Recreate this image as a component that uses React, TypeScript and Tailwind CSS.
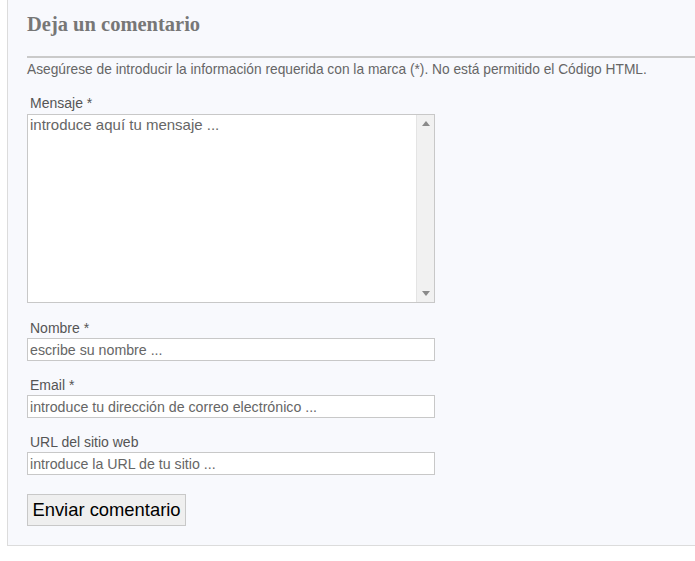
const FIELDS = [
  { label: "Nombre *", placeholder: "escribe su nombre ...", top: "mt-[17px]" },
  { label: "Email *", placeholder: "introduce tu dirección de correo electrónico ...", top: "mt-[16px]" },
  { label: "URL del sitio web", placeholder: "introduce la URL de tu sitio ...", top: "mt-[16px]" },
];

function Field({ label, placeholder, top }: { label: string; placeholder: string; top: string }) {
  return (
    <div className={top}>
      <label className="block pl-[3px] text-[14px] leading-[16px] text-[#555]">{label}</label>
      <input
        type="text"
        placeholder={placeholder}
        className="mt-[2px] block h-[23px] w-[408px] border border-[#c8c8c8] bg-white px-[2px] text-[14.2px] text-[#555] outline-none placeholder:text-[#666]"
      />
    </div>
  );
}

export default function App() {
  return (
    <div className="min-h-[561px] bg-white font-['Liberation_Sans',Arial,sans-serif]">
      <div className="ml-[7px] border-b border-l border-[#dcdcdc] bg-[#f8f9fd] pb-[19px] pl-[19px]">
        <h2 className="border-b-2 border-[#cacaca] pb-[22px] pt-[14px] font-['Liberation_Serif',Georgia,serif] text-[20.5px] font-bold leading-[20px] text-[#777]">
          Deja un comentario
        </h2>
        <p className="mt-[4px] text-[13.75px] leading-[16px] text-[#666]">
          Asegúrese de introducir la información requerida con la marca (*). No está permitido el Código HTML.
        </p>

        <div className="mt-[17px]">
          <label className="block pl-[3px] text-[14px] leading-[16px] text-[#555]">Mensaje *</label>
          <div className="mt-[3px] flex h-[189px] w-[408px] border border-[#c8c8c8] bg-white">
            <textarea
              placeholder="introduce aquí tu mensaje ..."
              className="flex-1 resize-none bg-white px-[2px] py-[1px] text-[15px] leading-[18px] text-[#555] outline-none placeholder:text-[#666]"
            />
            <div className="flex w-[18px] flex-col items-center justify-between border-l border-[#e4e4e4] bg-[#f1f1f1] py-[6px]">
              <svg width="8" height="5" viewBox="0 0 8 5">
                <path d="M4 0 L8 5 L0 5 Z" fill="#8a8a8a" />
              </svg>
              <svg width="8" height="5" viewBox="0 0 8 5">
                <path d="M0 0 L8 0 L4 5 Z" fill="#8a8a8a" />
              </svg>
            </div>
          </div>
        </div>

        {FIELDS.map((f) => (
          <Field key={f.label} {...f} />
        ))}

        <button
          type="button"
          className="mt-[19px] h-[32px] w-[159px] border border-[#c8c8c8] bg-[#efefef] text-[18.4px] leading-[20px] text-black"
        >
          Enviar comentario
        </button>
      </div>
    </div>
  );
}
